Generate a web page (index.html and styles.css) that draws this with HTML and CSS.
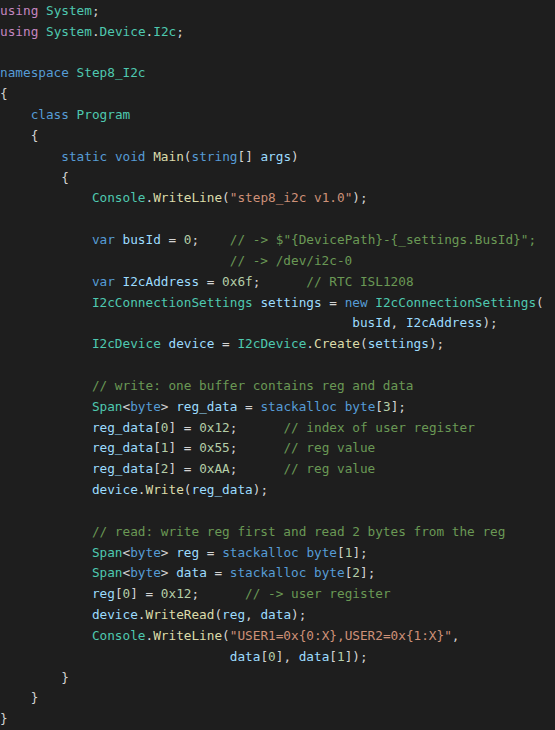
FILE: index.html
```html
<!DOCTYPE html>
<html lang="en">
<head>
  <meta charset="UTF-8">
  <meta name="viewport" content="width=device-width, initial-scale=1.0">
  <title>Program.cs</title>
  <link rel="stylesheet" href="styles.css">
</head>
<body>
  <div class="editor">
<div class="line"><span class="ctl">using</span> <span class="ty">System</span>;</div>
<div class="line"><span class="ctl">using</span> <span class="ty">System</span>.<span class="ty">Device</span>.<span class="ty">I2c</span>;</div>
<div class="line"> </div>
<div class="line"><span class="kw">namespace</span> <span class="ty">Step8_I2c</span></div>
<div class="line">{</div>
<div class="line">    <span class="kw">class</span> <span class="ty">Program</span></div>
<div class="line">    {</div>
<div class="line">        <span class="kw">static</span> <span class="kw">void</span> <span class="fn">Main</span>(<span class="kw">string</span>[] <span class="va">args</span>)</div>
<div class="line">        {</div>
<div class="line">            <span class="ty">Console</span>.<span class="fn">WriteLine</span>(<span class="st">"step8_i2c v1.0"</span>);</div>
<div class="line"> </div>
<div class="line">            <span class="kw">var</span> <span class="va">busId</span> = <span class="nu">0</span>;    <span class="cm">// -&gt; $"{DevicePath}-{_settings.BusId}";</span></div>
<div class="line">                              <span class="cm">// -&gt; /dev/i2c-0</span></div>
<div class="line">            <span class="kw">var</span> <span class="va">I2cAddress</span> = <span class="nu">0x6f</span>;      <span class="cm">// RTC ISL1208</span></div>
<div class="line">            <span class="ty">I2cConnectionSettings</span> <span class="va">settings</span> = <span class="kw">new</span> <span class="ty">I2cConnectionSettings</span>(</div>
<div class="line">                                              <span class="va">busId</span>, <span class="va">I2cAddress</span>);</div>
<div class="line">            <span class="ty">I2cDevice</span> <span class="va">device</span> = <span class="ty">I2cDevice</span>.<span class="fn">Create</span>(<span class="va">settings</span>);</div>
<div class="line"> </div>
<div class="line">            <span class="cm">// write: one buffer contains reg and data</span></div>
<div class="line">            <span class="ty">Span</span>&lt;<span class="kw">byte</span>&gt; <span class="va">reg_data</span> = <span class="kw">stackalloc</span> <span class="kw">byte</span>[<span class="nu">3</span>];</div>
<div class="line">            <span class="va">reg_data</span>[<span class="nu">0</span>] = <span class="nu">0x12</span>;      <span class="cm">// index of user register</span></div>
<div class="line">            <span class="va">reg_data</span>[<span class="nu">1</span>] = <span class="nu">0x55</span>;      <span class="cm">// reg value</span></div>
<div class="line">            <span class="va">reg_data</span>[<span class="nu">2</span>] = <span class="nu">0xAA</span>;      <span class="cm">// reg value</span></div>
<div class="line">            <span class="va">device</span>.<span class="fn">Write</span>(<span class="va">reg_data</span>);</div>
<div class="line"> </div>
<div class="line">            <span class="cm">// read: write reg first and read 2 bytes from the reg</span></div>
<div class="line">            <span class="ty">Span</span>&lt;<span class="kw">byte</span>&gt; <span class="va">reg</span> = <span class="kw">stackalloc</span> <span class="kw">byte</span>[<span class="nu">1</span>];</div>
<div class="line">            <span class="ty">Span</span>&lt;<span class="kw">byte</span>&gt; <span class="va">data</span> = <span class="kw">stackalloc</span> <span class="kw">byte</span>[<span class="nu">2</span>];</div>
<div class="line">            <span class="va">reg</span>[<span class="nu">0</span>] = <span class="nu">0x12</span>;      <span class="cm">// -&gt; user register</span></div>
<div class="line">            <span class="va">device</span>.<span class="fn">WriteRead</span>(<span class="va">reg</span>, <span class="va">data</span>);</div>
<div class="line">            <span class="ty">Console</span>.<span class="fn">WriteLine</span>(<span class="st">"USER1=0x{0:X},USER2=0x{1:X}"</span>,</div>
<div class="line">                              <span class="va">data</span>[<span class="nu">0</span>], <span class="va">data</span>[<span class="nu">1</span>]);</div>
<div class="line">        }</div>
<div class="line">    }</div>
<div class="line">}</div>
  </div>
</body>
</html>
```

FILE: styles.css
```css
/* Editor */
html, body {
  margin: 0;
  padding: 0;
  background: #1e1e1e;
}

.editor {
  padding-top: 1px;
  font-family: "DejaVu Sans Mono", monospace;
  font-size: 12.72px;
  line-height: 20.83px;
  color: #d4d4d4;
  background: #1e1e1e;
  min-height: 100vh;
}

.line {
  white-space: pre;
  height: 20.83px;
}

/* Tokens */
.ctl { color: #c586c0; }
.kw  { color: #569cd6; }
.ty  { color: #4ec9b0; }
.fn  { color: #dcdcaa; }
.va  { color: #9cdcfe; }
.st  { color: #ce9178; }
.nu  { color: #b5cea8; }
.cm  { color: #6a9955; }
```
